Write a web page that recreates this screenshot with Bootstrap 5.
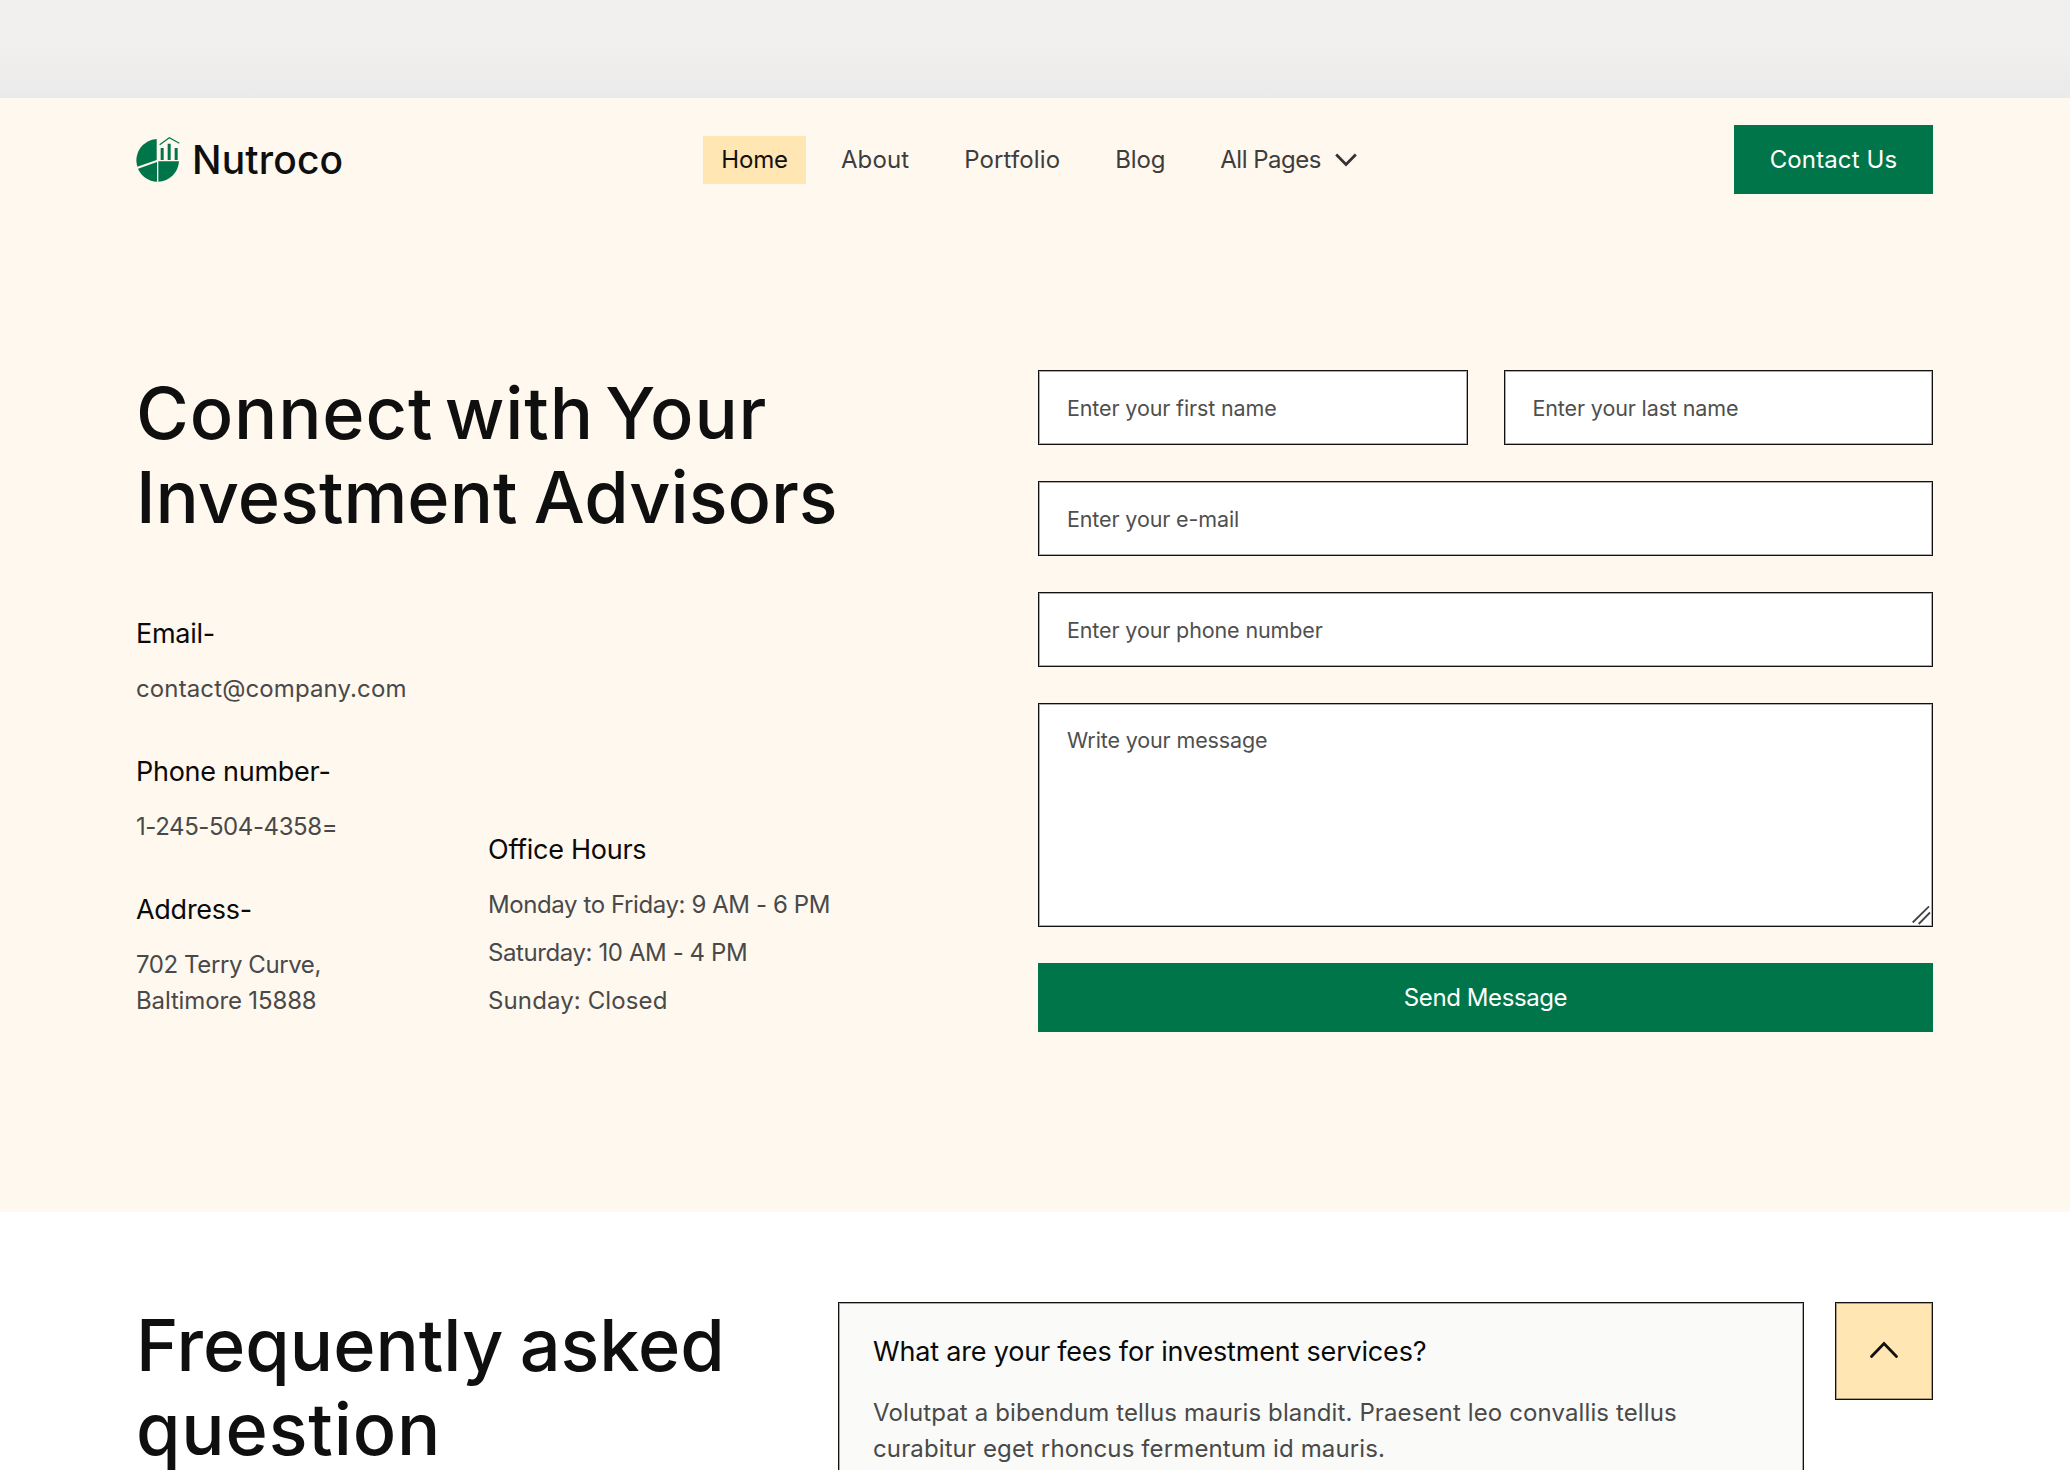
<!DOCTYPE html>
<html lang="en">
<head>
    <meta charset="UTF-8">
    <meta name="viewport" content="width=device-width, initial-scale=1.0">
    <title>Nutroco - Contact</title>
    <link href="https://cdn.jsdelivr.net/npm/bootstrap@5.3.0/dist/css/bootstrap.min.css" rel="stylesheet">
    <style>
        body { font-family: Inter, "Liberation Sans", sans-serif; font-size: 24px; line-height: 36px; color: #494949; background: #fff; letter-spacing: -.02em; }
        .page-pad { padding-left: 137px; padding-right: 137px; }
        .top-strip { height: 98px; background: linear-gradient(#f1f0ee 45%, #ebeaea); }
        .cream { background: #fff8ee; }

        /* letter spacing steps */
        .ls-wide { letter-spacing: .005em; }
        .ls-mid { letter-spacing: -.006em; }
        .ls-snug { letter-spacing: -.017em; }

        .site-nav { height: 123px; }
        .brand-icon { margin: 0 0 1px -1px; }
        .brand-name { margin-left: 12px; font-size: 39px; font-weight: 500; line-height: 46px; color: #0f0f0f; letter-spacing: .004em; }
        .menu { gap: 19px; }
        .menu li:first-child { margin-right: -2px; }
        .menu .nav-link { padding: 6px 18px; color: #3d3d3d; white-space: nowrap; }
        .menu .nav-link.active { background: #ffe6b3; color: #111; }
        .menu li:last-child .nav-link { padding-right: 17px; }
        .menu-arrow { margin-left: 14px; }
        .btn-green { height: 69px; border: 0; border-radius: 0; background: #007549; color: #fff; font-size: 24px; }
        .btn-green:hover { background: #00613c; color: #fff; }
        .btn-contact { width: 199px; }

        .hero { padding-top: 149px; padding-bottom: 180px; }
        .big-title { padding-top: 1px; margin-left: -1px; font-size: 72px; line-height: 84px; font-weight: 500; color: #0f0f0f; letter-spacing: 0; word-spacing: -.04em; }
        .big-title .line-open { letter-spacing: .012em; word-spacing: -.12em; }
        .contact-form { width: 895px; gap: 36px; }
        .name-row { gap: 36px; }
        .details { margin-top: 77px; margin-left: -1px; }
        .details-left { width: 352px; gap: 47px; }
        .item-title { font-size: 27px; line-height: 36px; font-weight: 400; color: #0a0a0a; margin-bottom: 19px; letter-spacing: -.01em; }
        .hours { gap: 12px; }

        .contact-form .form-control { height: 75px; border: 1px solid #111; border-radius: 0; padding: 0 28px; font-size: 21.5px; line-height: 32px; background: #fff; box-shadow: inset 0 0 0 1px rgba(17, 17, 17, .35); letter-spacing: -.006em; }
        .contact-form .form-control::placeholder { color: #4f4f4f; opacity: 1; }
        .contact-form textarea.form-control { display: block; height: 224px; padding-top: 20px; resize: none; }
        .grip { position: absolute; right: 1px; bottom: 1px; }

        .faq { height: 258px; padding-top: 90px; overflow: hidden; }
        .faq-title { width: 702px; flex: none; }
        .faq-card { width: 966px; height: 260px; flex: none; border: 1px solid #111; background: #fafaf8; padding: 31px 34px; box-shadow: inset 0 0 0 1px rgba(17, 17, 17, .35); }
        .faq-card .item-title { margin-bottom: 25px; letter-spacing: -.007em; }
        .faq-toggle { width: 98px; height: 98px; flex: none; margin-left: 31px; padding: 0; border: 1px solid #111; border-radius: 0; background: #ffe6b3; box-shadow: inset 0 0 0 1px rgba(17, 17, 17, .35); }
    </style>
</head>
<body>
    <div class="top-strip"></div>

    <div class="cream">
        <!-- Navigation -->
        <header class="site-nav page-pad d-flex justify-content-between align-items-center">
            <a href="#" class="d-flex align-items-center text-decoration-none">
                <svg class="brand-icon" width="44" height="46" viewBox="50 168 132 138" fill="#007549">
                    <path d="M112 177V240L54 260A64 64 0 0 1 112 177Z"/>
                    <path d="M56 266L113 246V305A64 64 0 0 1 56 266Z"/>
                    <path d="M117 244H179A64 64 0 0 1 117 305Z"/>
                    <path d="M124 204h9v36h-9zM145 191h9v49h-9zM166 204h9v36h-9z"/>
                    <path d="M121 194L150 173L180 190" fill="none" stroke="#007549" stroke-width="3.5"/>
                </svg>
                <span class="brand-name">Nutroco</span>
            </a>
            <ul class="menu nav">
                <li><a class="nav-link active ls-mid" href="#">Home</a></li>
                <li><a class="nav-link ls-wide" href="#">About</a></li>
                <li><a class="nav-link ls-wide" href="#">Portfolio</a></li>
                <li><a class="nav-link ls-mid" href="#">Blog</a></li>
                <li>
                    <a class="nav-link d-flex align-items-center" href="#">All Pages
                        <svg class="menu-arrow" width="22" height="14" viewBox="0 0 22 14" fill="none" stroke="#333" stroke-width="2.8"><path d="M1.2 1.5L11 11.5L20.8 1.5"/></svg>
                    </a>
                </li>
            </ul>
            <a href="#" class="btn btn-green btn-contact ls-wide d-flex align-items-center justify-content-center">Contact Us</a>
        </header>

        <!-- Contact -->
        <section class="hero page-pad d-flex justify-content-between align-items-start">
            <div>
                <h1 class="big-title mb-0"><span class="line-open">Connect with Your</span><br>Investment Advisors</h1>
                <div class="details d-flex align-items-end">
                    <div class="details-left d-flex flex-column">
                        <div>
                            <h2 class="item-title">Email-</h2>
                            <p class="mb-0 ls-wide">contact@company.com</p>
                        </div>
                        <div>
                            <h2 class="item-title">Phone number-</h2>
                            <p class="mb-0 ls-snug">1-245-504-4358=</p>
                        </div>
                        <div>
                            <h2 class="item-title">Address-</h2>
                            <p class="mb-0 ls-snug">702 Terry Curve,<br><span class="ls-mid">Baltimore 15888</span></p>
                        </div>
                    </div>
                    <div>
                        <h2 class="item-title">Office Hours</h2>
                        <div class="hours d-flex flex-column">
                            <p class="mb-0 ls-snug">Monday to Friday: 9 AM - 6 PM</p>
                            <p class="mb-0 ls-snug">Saturday: 10 AM - 4 PM</p>
                            <p class="mb-0 ls-wide">Sunday: Closed</p>
                        </div>
                    </div>
                </div>
            </div>
            <form class="contact-form d-flex flex-column">
                <div class="name-row d-flex">
                    <input type="text" class="form-control" placeholder="Enter your first name">
                    <input type="text" class="form-control" placeholder="Enter your last name">
                </div>
                <input type="email" class="form-control" placeholder="Enter your e-mail">
                <input type="tel" class="form-control" placeholder="Enter your phone number">
                <div class="position-relative">
                    <textarea class="form-control" placeholder="Write your message"></textarea>
                    <svg class="grip" width="20" height="20" viewBox="0 0 20 20" fill="none" stroke="#444" stroke-width="1.8"><path d="M.7 16.5L17 .4M6.7 18L18 6.5"/></svg>
                </div>
                <button type="button" class="btn btn-green w-100 ls-snug">Send Message</button>
            </form>
        </section>
    </div>

    <!-- FAQ -->
    <section class="faq page-pad d-flex align-items-start">
        <h2 class="big-title faq-title mb-0">Frequently asked<br><span class="line-open">question</span></h2>
        <div class="faq-card">
            <h3 class="item-title">What are your fees for investment services?</h3>
            <p class="mb-0 ls-wide">Volutpat a bibendum tellus mauris blandit. Praesent leo convallis tellus<br>curabitur eget rhoncus fermentum id mauris.</p>
        </div>
        <button type="button" class="faq-toggle btn d-flex align-items-center justify-content-center">
            <svg width="30" height="20" viewBox="0 0 30 20" fill="none" stroke="#111" stroke-width="2.8" stroke-linecap="round"><path d="M2.5 15.5L15 2.5L27.5 15.5"/></svg>
        </button>
    </section>

    <script src="https://cdn.jsdelivr.net/npm/bootstrap@5.3.0/dist/js/bootstrap.bundle.min.js"></script>
</body>
</html>
